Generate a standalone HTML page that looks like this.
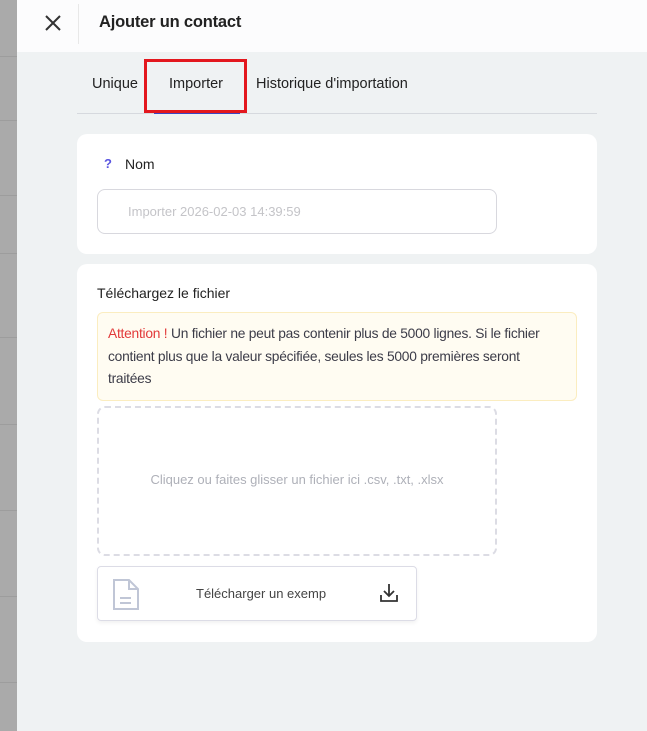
<!DOCTYPE html>
<html><head><meta charset="utf-8"><style>
*{box-sizing:border-box;margin:0;padding:0}
body{width:647px;height:731px;overflow:hidden;background:#eff2f3;font-family:"Liberation Sans",sans-serif;position:relative;color:#222}
.side{position:absolute;left:0;top:0;width:17px;height:731px;background:#aaaaaa}
.side i{position:absolute;left:0;width:17px;height:1px;background:#9d9d9d}
.hdr{position:absolute;left:17px;top:0;width:630px;height:52px;background:#fcfcfd}
.hdr .sep{position:absolute;left:61px;top:4px;width:1px;height:40px;background:#e8e8e8}
.hdr .t{position:absolute;left:82px;top:13px;font-size:16.5px;color:#222;font-weight:bold;letter-spacing:-.2px}
.tabs{position:absolute;left:77px;top:113px;width:520px;height:1px;background:#d6d9de}
.tab{position:absolute;top:76px;font-size:14.5px;color:#222}
.card{position:absolute;left:77px;width:520px;background:#fff;border-radius:10px}
.inp{position:absolute;left:20px;top:55px;width:400px;height:45px;border:1px solid #d8d8de;border-radius:8px;font-size:13px;color:#c4c4c8;padding:14px 0 0 30px}
.warn{position:absolute;left:20px;top:48px;width:480px;height:89px;background:#fffcf2;border:1px solid #fbedc0;border-radius:6px;padding:10px 10px;font-size:13.8px;line-height:22.5px;color:#3c3c48;letter-spacing:-.25px}
.drop{position:absolute;left:20px;top:142px;width:400px;height:150px;border:2px dashed #dcdce4;border-radius:8px;font-size:13px;color:#aeb0b8;text-align:center;padding-top:64px}
.dl{position:absolute;left:20px;top:302px;width:320px;height:55px;border:1px solid #dcdce6;border-radius:4px;box-shadow:0 2px 4px rgba(0,0,0,.06);font-size:13px;color:#444}
</style></head><body>
<div class="side"><i style="top:56px"></i><i style="top:120px"></i><i style="top:195px"></i><i style="top:253px"></i><i style="top:337px"></i><i style="top:424px"></i><i style="top:510px"></i><i style="top:596px"></i><i style="top:682px"></i></div>
<div class="hdr">
<svg style="position:absolute;left:27px;top:14px" width="18" height="18" viewBox="0 0 18 18"><path d="M2 2L16 16M16 2L2 16" stroke="#333" stroke-width="2"/></svg>
<div class="sep"></div><div class="t">Ajouter un contact</div></div>
<div class="tab" style="left:92px">Unique</div>
<div class="tab" style="left:169px">Importer</div>
<div class="tab" style="left:256px">Historique d'importation</div>
<div class="tabs"></div>
<div style="position:absolute;left:154px;top:111px;width:86px;height:3px;background:#3a46c4"></div>
<div style="position:absolute;left:144px;top:59px;width:103px;height:54px;border:3px solid #e3171e"></div>
<div class="card" style="top:134px;height:120px">
<div style="position:absolute;left:27px;top:22px;font-size:13px;color:#5a55e0;font-weight:bold">?</div>
<div style="position:absolute;left:48px;top:22px;font-size:14px">Nom</div>
<div class="inp">Importer 2026-02-03 14:39:59</div>
</div>
<div class="card" style="top:264px;height:378px">
<div style="position:absolute;left:20px;top:21px;font-size:14px">Téléchargez le fichier</div>
<div class="warn"><span style="color:#e23a3a">Attention !</span> Un fichier ne peut pas contenir plus de 5000 lignes. Si le fichier contient plus que la valeur spécifiée, seules les 5000 premières seront traitées</div>
<div class="drop">Cliquez ou faites glisser un fichier ici .csv, .txt, .xlsx</div>
<div class="dl">
<svg style="position:absolute;left:14px;top:11px" width="28" height="33" viewBox="0 0 28 33"><path d="M2 2H17L26 11V31H2Z M17 2V11H26 M8 20H19 M8 25H19" fill="none" stroke="#c0c6d6" stroke-width="2"/></svg>
<div style="position:absolute;left:98px;top:19px">Télécharger un exemp</div>
<svg style="position:absolute;left:281px;top:16px" width="20" height="20" viewBox="0 0 20 20"><path d="M10 1V13M5 8L10 13L15 8M2 12V18H18V12" fill="none" stroke="#333" stroke-width="1.8"/></svg>
</div>
</div>
</body></html>
